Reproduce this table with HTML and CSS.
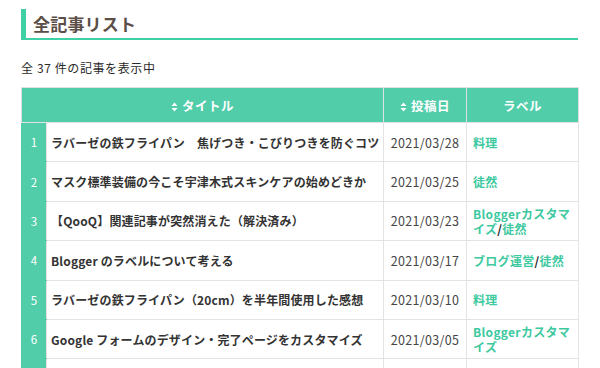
FILE: index.html
```html
<!DOCTYPE html>
<html lang="ja">
<head>
<meta charset="utf-8">
<link rel="stylesheet" href="styles.css">
</head>
<body>
<div class="page">
  <h2 class="heading">全記事リスト</h2>
  <p class="count">全 37 件の記事を表示中</p>
  <table class="list">
    <colgroup>
      <col class="c-num"><col class="c-title"><col class="c-date"><col class="c-label">
    </colgroup>
    <thead>
      <tr>
        <th colspan="2"><svg class="sort" viewBox="0 0 7 10" width="7" height="10"><path d="M3.5 0.5 L6.5 4 H0.5 Z M3.5 9.5 L6.5 6 H0.5 Z" fill="#fff"/></svg>タイトル</th>
        <th><svg class="sort" viewBox="0 0 7 10" width="7" height="10"><path d="M3.5 0.5 L6.5 4 H0.5 Z M3.5 9.5 L6.5 6 H0.5 Z" fill="#fff"/></svg>投稿日</th>
        <th>ラベル</th>
      </tr>
    </thead>
    <tbody>
      <tr><td class="num">1</td><td class="title">ラバーゼの鉄フライパン　焦げつき・こびりつきを防ぐコツ</td><td class="date">2021/03/28</td><td class="label"><a>料理</a></td></tr>
      <tr><td class="num">2</td><td class="title">マスク標準装備の今こそ宇津木式スキンケアの始めどきか</td><td class="date">2021/03/25</td><td class="label"><a>徒然</a></td></tr>
      <tr><td class="num">3</td><td class="title">【QooQ】関連記事が突然消えた（解決済み）</td><td class="date">2021/03/23</td><td class="label"><a>Bloggerカスタマイズ</a>/<a>徒然</a></td></tr>
      <tr><td class="num">4</td><td class="title">Blogger のラベルについて考える</td><td class="date">2021/03/17</td><td class="label"><a>ブログ運営</a>/<a>徒然</a></td></tr>
      <tr><td class="num">5</td><td class="title">ラバーゼの鉄フライパン（20cm）を半年間使用した感想</td><td class="date">2021/03/10</td><td class="label"><a>料理</a></td></tr>
      <tr><td class="num">6</td><td class="title">Google フォームのデザイン・完了ページをカスタマイズ</td><td class="date">2021/03/05</td><td class="label"><a>Bloggerカスタマイズ</a></td></tr>
      <tr><td class="num">&nbsp;</td><td class="title">&nbsp;</td><td class="date">&nbsp;</td><td class="label">&nbsp;</td></tr>
    </tbody>
  </table>
</div>
</body>
</html>
```

FILE: styles.css
```css
html, body {
  margin: 0;
  padding: 0;
  background: #fff;
}
body {
  font-family: "Noto Sans CJK JP", "Noto Sans", sans-serif;
  color: #333;
  overflow: hidden;
}
.page {
  padding: 9px 22px 0 21px;
  width: 557px;
}
.heading {
  margin: 0;
  font-size: 17px;
  font-weight: bold;
  color: #5b4e46;
  line-height: 29px;
  padding-left: 7px;
  border-left: 5px solid #3fd0a6;
  border-bottom: 2px solid #3fd0a6;
  letter-spacing: 0.2px;
}
.count {
  margin: 19px 0 0;
  font-size: 12px;
  line-height: 18px;
  color: #2a2a2a;
  letter-spacing: 0.6px;
}
.list {
  margin-top: 10px;
  width: 557px;
  border-collapse: collapse;
  table-layout: fixed;
  font-size: 12px;
}
.c-num { width: 25px; }
.c-title { width: 337px; }
.c-date { width: 83px; }
.c-label { width: 112px; }
.list th {
  background: #52cdaa;
  color: #fff;
  font-weight: bold;
  font-size: 12.5px;
  height: 34px;
  padding: 0;
  border: 1px solid #e0e0e0;
  text-align: center;
  letter-spacing: 0.5px;
}
.sort {
  vertical-align: -1px;
  margin-right: 4px;
}
.list td {
  border: 1px solid #e3e3e3;
  height: 38.4px;
  padding: 0;
  vertical-align: middle;
}
.list td.num {
  background: #52cdaa;
  color: #fff;
  text-align: center;
  font-size: 11.5px;
  border-left-color: #52cdaa;
  border-bottom-color: #52cdaa;
  border-top-color: #52cdaa;
}
.list td.title {
  padding-left: 4px;
  font-weight: bold;
  color: #333;
  letter-spacing: 0.15px;
  white-space: nowrap;
  overflow: hidden;
}
.list td.date {
  text-align: center;
  color: #444;
  font-size: 12.5px;
  letter-spacing: 0.3px;
}
.list td.label {
  padding: 0 6px;
  font-weight: bold;
  color: #222;
  line-height: 15px;
  letter-spacing: 0.3px;
}
.label a {
  color: #3ec9a0;
}
```
